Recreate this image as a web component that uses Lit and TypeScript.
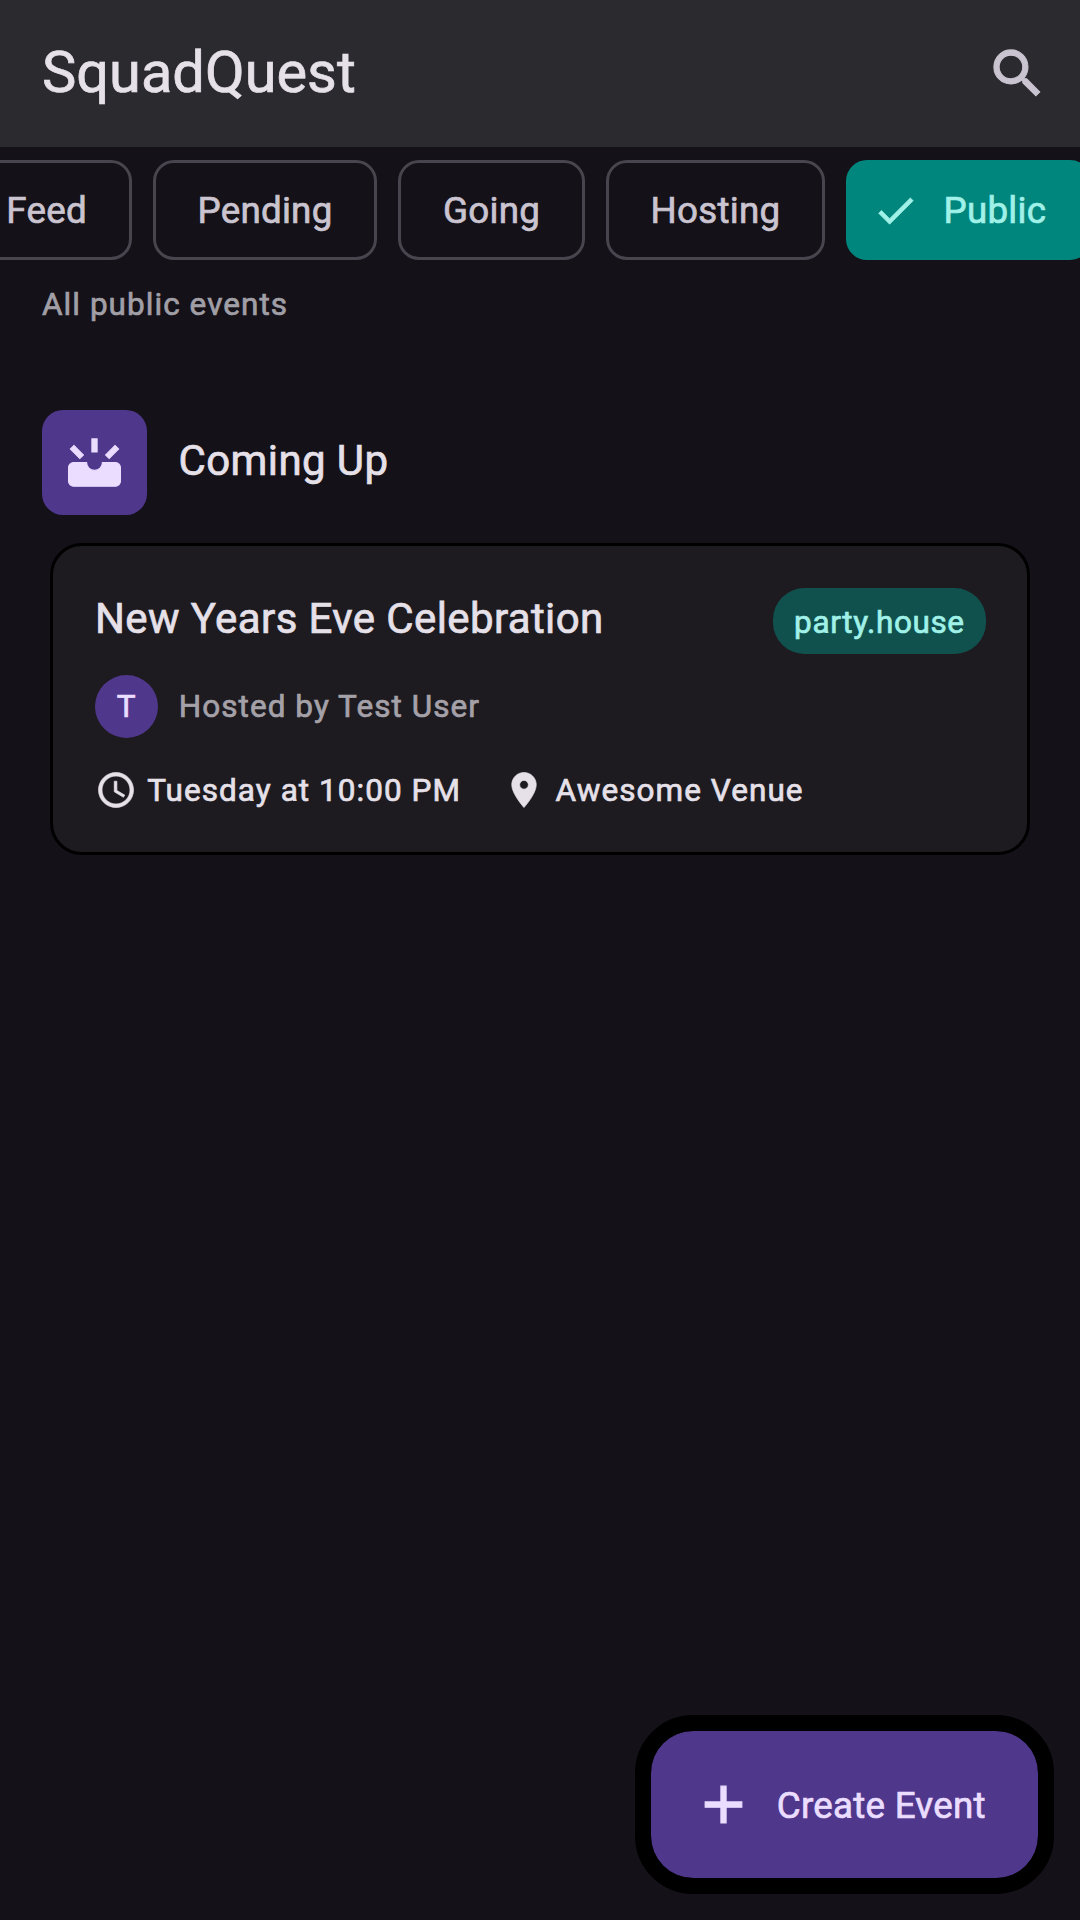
import { LitElement, html, css, svg } from "lit";
import { customElement, property } from "lit/decorators.js";

const ICONS = {
  search: svg`<path d="M15.5 14h-.79l-.28-.27C15.41 12.59 16 11.11 16 9.5 16 5.91 13.09 3 9.5 3S3 5.91 3 9.5 5.91 16 9.5 16c1.61 0 3.09-.59 4.23-1.57l.27.28v.79l5 4.99L20.49 19l-4.99-5zm-6 0C7.01 14 5 11.99 5 9.5S7.01 5 9.5 5 14 7.01 14 9.5 11.99 14 9.5 14z"/>`,
  check: svg`<path d="M9 16.17 4.83 12l-1.42 1.41L9 19 21 7l-1.41-1.41z"/>`,
  upcoming: svg`<path d="M11 3h2v5h-2zM4.2 5.5 2.8 6.9 6.4 10.5 7.8 9.1zM19.8 5.5 21.2 6.9 17.6 10.5 16.2 9.1zM15 12c0 1.66-1.34 3-3 3s-3-1.34-3-3H4c-1.1 0-1.9.9-1.9 2v5c0 1.1.8 2 1.9 2h16c1.1 0 1.9-.9 1.9-2v-5c0-1.1-.8-2-1.9-2z"/>`,
  clock: svg`<path d="M11.99 2C6.47 2 2 6.48 2 12s4.47 10 9.99 10C17.52 22 22 17.52 22 12S17.52 2 11.99 2zM12 20c-4.42 0-8-3.58-8-8s3.58-8 8-8 8 3.58 8 8-3.58 8-8 8zm.5-13H11v6l5.25 3.15.75-1.23-4.5-2.67z"/>`,
  place: svg`<path d="M12 2C8.13 2 5 5.13 5 9c0 5.25 7 13 7 13s7-7.75 7-13c0-3.87-3.13-7-7-7zm0 9.5c-1.38 0-2.5-1.12-2.5-2.5s1.12-2.5 2.5-2.5 2.5 1.12 2.5 2.5-1.12 2.5-2.5 2.5z"/>`,
  add: svg`<path d="M19 13h-6v6h-2v-6H5v-2h6V5h2v6h6v2z"/>`,
};

@customElement("md-icon")
class MdIcon extends LitElement {
  static styles = css`
    :host { display: block; flex: none; }
    .glyph { display: block; width: 100%; height: 100%; fill: currentColor; stroke: currentColor; stroke-width: 0.4; }
  `;
  @property() name: keyof typeof ICONS = "add";
  render() {
    return html`<svg class="glyph" viewBox="0 0 24 24">${ICONS[this.name]}</svg>`;
  }
}

@customElement("event-card")
class EventCard extends LitElement {
  static styles = css`
    :host {
      display: flex;
      flex-direction: column;
      box-sizing: border-box;
      height: 312px;
      padding: 42px 41px 0 41.4px;
      border: 3px solid #000;
      border-radius: 32px;
      background: #1d1b20;
      color: #e6e0e9;
      white-space: nowrap;
    }
    .top { display: flex; justify-content: space-between; align-items: flex-start; height: 86.5px; }
    .title { padding: 1px 0 0 0.3px; font-size: 42px; line-height: 60px; letter-spacing: 0.4px; }
    .tag {
      height: 65.6px;
      padding: 0 21px;
      border-radius: 31.5px;
      background: #10514e;
      color: #a0f1e8;
      font-size: 31.5px;
      line-height: 70px;
      letter-spacing: 0.62px;
      box-sizing: border-box;
    }
    .host { display: flex; align-items: center; gap: 21px; height: 63px; }
    .avatar {
      width: 63px; height: 63px; border-radius: 50%;
      background: #4f378b; color: #eaddff;
      font-size: 31.5px; line-height: 64px; text-align: center;
    }
    .by { padding-top: 1px; color: #a5a1a8; font-size: 31.5px; letter-spacing: 1.05px; }
    .meta { display: flex; align-items: center; padding-top: 31.5px; height: 42px; font-size: 31.5px; letter-spacing: 1.05px; }
    .small { width: 42px; height: 42px; }
    .when { margin: 0 42px 0 10.5px; padding-top: 1px; }
    .where { margin-left: 10.5px; padding-top: 1px; }
  `;
  @property() heading = "";
  @property() tag = "";
  @property() host = "";
  @property() when = "";
  @property() venue = "";
  render() {
    return html`
      <div class="top"><div class="title">${this.heading}</div><div class="tag">${this.tag}</div></div>
      <div class="host"><div class="avatar">${this.host.charAt(0)}</div><div class="by">Hosted by ${this.host}</div></div>
      <div class="meta">
        <md-icon class="small" name="clock"></md-icon><span class="when">${this.when}</span>
        <md-icon class="small" name="place"></md-icon><span class="where">${this.venue}</span>
      </div>`;
  }
}

@customElement("app-root")
class AppRoot extends LitElement {
  static styles = css`
    :host {
      display: flex;
      flex-direction: column;
      position: relative;
      box-sizing: border-box;
      width: 1080px;
      height: 1920px;
      overflow: hidden;
      background: #141118;
      color: #e6e0e9;
      font-family: Roboto, "Liberation Sans", sans-serif;
      -webkit-text-stroke: 0.7px currentColor;
    }
    .bar {
      display: flex; align-items: center; justify-content: space-between;
      height: 147px; flex: none; box-sizing: border-box;
      padding: 0 31.5px 0 42px; background: #2b2a2f;
    }
    .brand { font-size: 57.75px; line-height: 74px; padding-bottom: 4px; }
    .search { width: 63px; height: 63px; color: #cac4d0; }
    .chips { display: flex; justify-content: flex-end; gap: 21px; padding-top: 13px; margin-right: -11.2px; height: 100px; flex: none; }
    .chip {
      box-sizing: border-box; flex: none; height: 100px;
      display: flex; align-items: center;
      padding: 0 41.7px; border: 3px solid #49454f; border-radius: 21px;
      color: #cac4d0; font-size: 36.75px; letter-spacing: 0.26px;
    }
    .chip.on { background: #00867d; border-color: #00867d; color: #a0f1e8; padding: 0 42px 0 23px; }
    .tick { width: 47px; height: 47px; margin-right: 24.4px; }
    .note { margin: 24px 42px 0; font-size: 31.5px; line-height: 42px; letter-spacing: 1.05px; color: #a19fa6; }
    .section { display: flex; align-items: center; gap: 31.5px; margin: 83.5px 42px 0; height: 105px; }
    .tile { display: grid; place-items: center; width: 105px; height: 105px; border-radius: 21px; background: #4f378b; color: #eaddff; }
    .upcoming { width: 63px; height: 63px; }
    .heading { font-size: 42px; line-height: 60px; padding-bottom: 2px; letter-spacing: 0.4px; }
    .card { margin: 28.7px 50.3px 0; }
    .fab {
      position: absolute; right: 26.3px; bottom: 26.3px;
      box-sizing: border-box; width: 419px; height: 179px;
      display: flex; align-items: center;
      padding-left: 41.5px;
      border: 16px solid #000; border-radius: 58px;
      background: #4f378b; background-clip: padding-box; color: #eaddff;
      font-size: 36.75px; letter-spacing: 0.26px; white-space: nowrap;
    }
    .add { width: 63px; height: 63px; margin-right: 21.5px; }
    .action { padding-top: 2px; }
  `;
  private filters = ["Feed", "Pending", "Going", "Hosting"];
  render() {
    return html`
      <div class="bar"><div class="brand">SquadQuest</div><md-icon class="search" name="search"></md-icon></div>
      <div class="chips">
        ${this.filters.map((f) => html`<div class="chip">${f}</div>`)}
        <div class="chip on"><md-icon class="tick" name="check"></md-icon>Public</div>
      </div>
      <div class="note">All public events</div>
      <div class="section">
        <div class="tile"><md-icon class="upcoming" name="upcoming"></md-icon></div>
        <div class="heading">Coming Up</div>
      </div>
      <event-card class="card" heading="New Years Eve Celebration" tag="party.house" host="Test User"
        when="Tuesday at 10:00 PM" venue="Awesome Venue"></event-card>
      <div class="fab"><md-icon class="add" name="add"></md-icon><span class="action">Create Event</span></div>`;
  }
}
